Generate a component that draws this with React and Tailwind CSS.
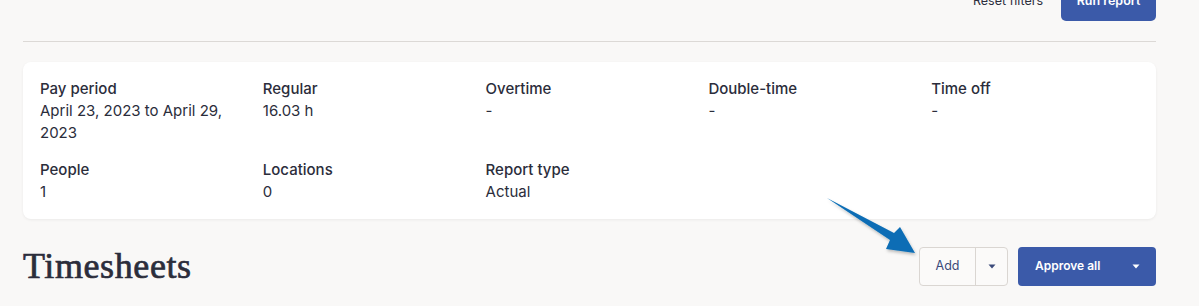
import React from 'react';

const stats = [
  { label: 'Pay period', value: 'April 23, 2023 to April 29, 2023' },
  { label: 'Regular', value: '16.03 h' },
  { label: 'Overtime', value: '-' },
  { label: 'Double-time', value: '-' },
  { label: 'Time off', value: '-' },
  { label: 'People', value: '1' },
  { label: 'Locations', value: '0' },
  { label: 'Report type', value: 'Actual' },
];

const Caret = ({ className }) => (
  <svg className={className} width="8" height="5" viewBox="0 0 8 5" fill="currentColor">
    <path d="M0.5 0.5h7L4 4.5z" />
  </svg>
);

const App = () => {
  return (
    <div className="relative w-[1199px] h-[306px] overflow-hidden bg-[#f9f8f7] font-['Inter',sans-serif] text-[#2d2f3e]">
      <div className="w-[1133px] ml-[23px]">
        {/* filter actions */}
        <div className="flex justify-end items-center gap-[18px] -mt-[18px]">
          <button className="text-[12.5px] text-[#2d2f3e]">Reset filters</button>
          <button className="h-[39px] w-[95px] rounded-[5px] bg-[#3b5aa9] text-white text-[12.5px] font-semibold">Run report</button>
        </div>
        <div className="mt-[20px] border-t border-[#dcd9d6]"></div>

        {/* summary card */}
        <div className="mt-[20px] bg-white rounded-[8px] shadow-[0_1px_3px_rgba(0,0,0,0.06)] pl-[17px] pt-[16px] pb-[16px]">
          <div className="grid grid-cols-[repeat(5,222.8px)] gap-y-[15px] text-[15px] leading-[22px]">
            {stats.map(s => (
              <div key={s.label} className="pr-[24px]">
                <div className="font-medium text-[#2b2d3b]">{s.label}</div>
                <div className="text-[#2b2d3b]">{s.value}</div>
              </div>
            ))}
          </div>
        </div>

        {/* timesheets header */}
        <div className="mt-[27px] flex items-center justify-between">
          <h1 className="font-['Liberation_Serif',serif] text-[36px] leading-[40px] font-normal text-[#2b2d3b] tracking-[0.6px] [-webkit-text-stroke:0.7px_#2b2d3b]">Timesheets</h1>
          <div className="flex items-center gap-[10px]">
            <div className="flex h-[39px] border border-[#dad6d2] rounded-[4px] bg-[#fbfaf9]">
              <button className="w-[56px] text-[12.5px] text-[#3b4a7a] border-r border-[#dad6d2]">Add</button>
              <button className="w-[31px] flex items-center justify-center text-[#3b4a7a]">
                <Caret />
              </button>
            </div>
            <button className="h-[39px] w-[138px] rounded-[4px] bg-[#3b5aa9] text-white text-[12px] font-semibold flex items-center justify-between pl-[17px] pr-[16px]">
              <span>Approve all</span>
              <Caret />
            </button>
          </div>
        </div>
      </div>

      {/* annotation arrow */}
      <svg className="absolute left-[820px] top-[192px]" width="100" height="70" viewBox="0 0 100 70">
        <defs>
          <filter id="sh" x="-20%" y="-20%" width="140%" height="140%">
            <feDropShadow dx="1" dy="2" stdDeviation="1.5" floodColor="#000" floodOpacity="0.25" />
          </filter>
        </defs>
        <path d="M7 6 L74 41 L80 35 L95 61 L66 57 L70 48 Z" fill="#0a6db5" filter="url(#sh)" />
      </svg>
    </div>
  );
};

export default App;
